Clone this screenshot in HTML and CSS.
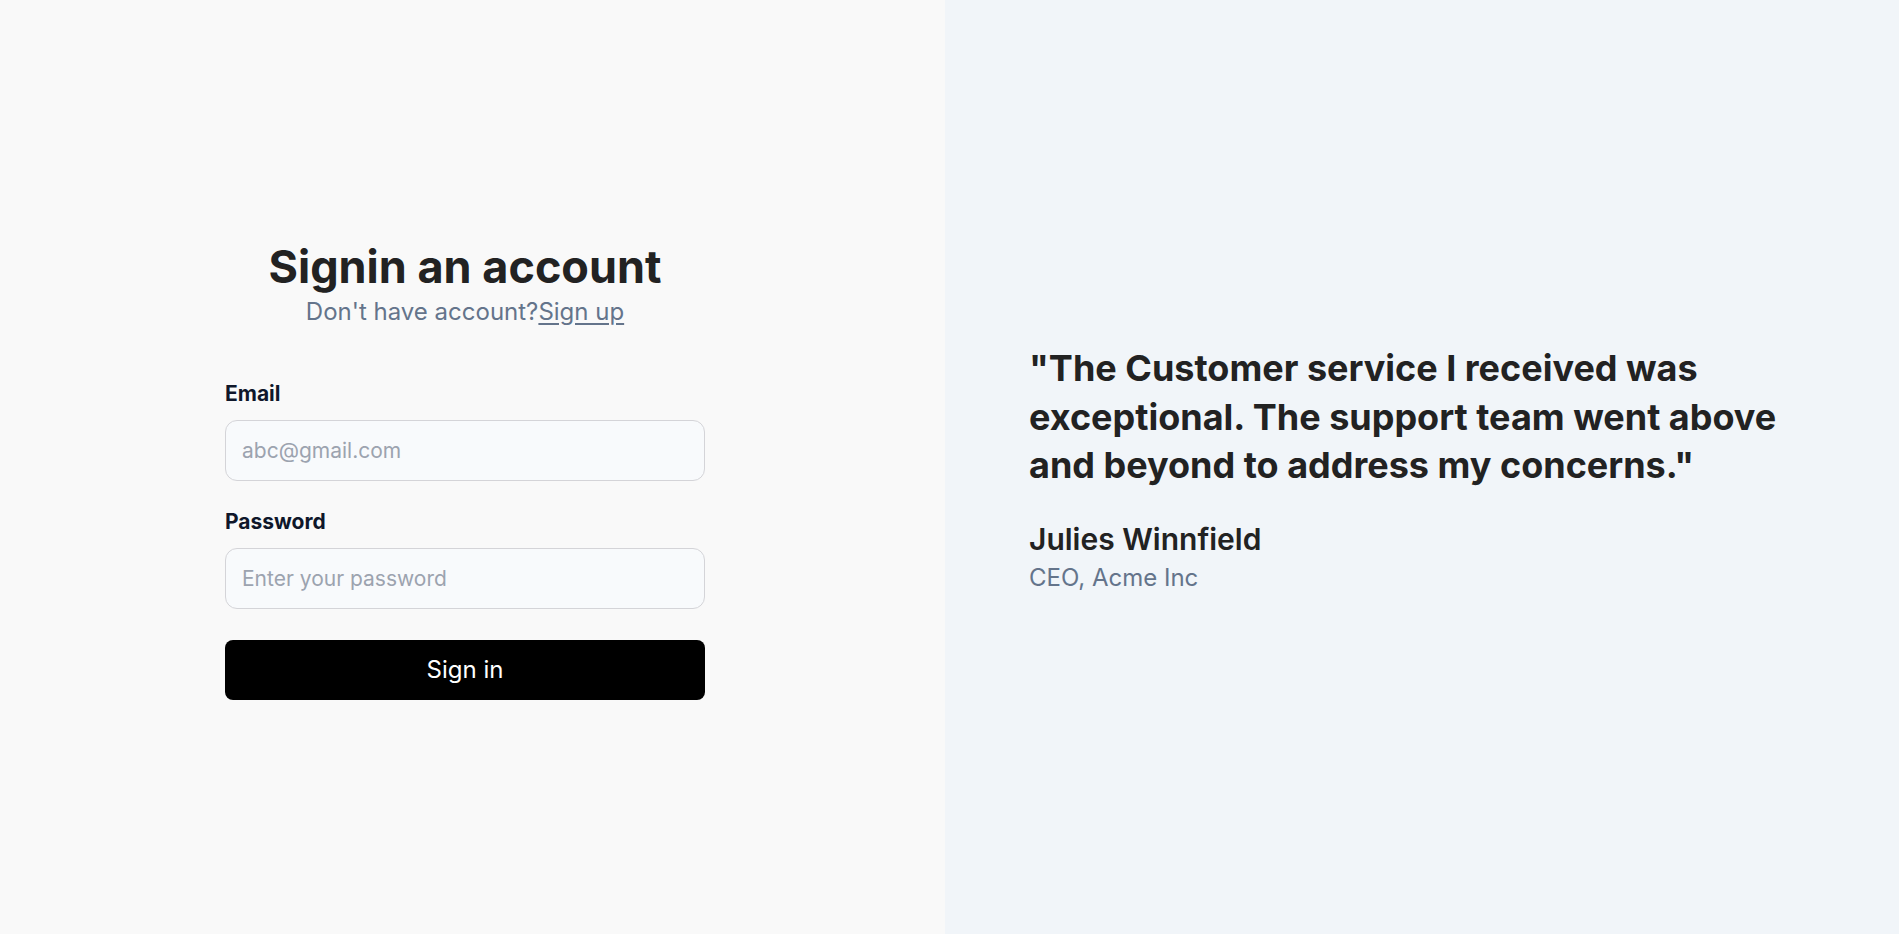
FILE: index.html
```html
<!DOCTYPE html>
<html lang="en">
<head>
<meta charset="utf-8">
<title>Signin</title>
<link rel="stylesheet" href="styles.css">
</head>
<body>
<main class="page">
  <section class="left">
    <div class="form-wrap">
      <h1 class="title">Signin an account</h1>
      <p class="subtitle">Don't have account?<a href="#" class="link">Sign up</a></p>
      <form class="form">
        <label class="label" for="email">Email</label>
        <input class="input" id="email" type="email" placeholder="abc@gmail.com">
        <label class="label label-pw" for="password">Password</label>
        <input class="input" id="password" type="password" placeholder="Enter your password">
        <button class="btn" type="button">Sign in</button>
      </form>
    </div>
  </section>
  <section class="right">
    <div class="testimonial">
      <blockquote class="quote">"The Customer service I received was exceptional. The support team went above and beyond to address my concerns."</blockquote>
      <div class="name">Julies Winnfield</div>
      <div class="role">CEO, Acme Inc</div>
    </div>
  </section>
</main>
</body>
</html>
```
FILE: styles.css
```css
* { box-sizing: border-box; }
html, body { margin: 0; padding: 0; }
body {
  font-family: Inter, "Noto Sans", sans-serif;
  color: #222222;
}
.page {
  display: grid;
  grid-template-columns: 945px 1fr;
  height: 934px;
}
.left {
  background: #f9f9f9;
  display: flex;
  align-items: center;
  justify-content: center;
  padding-right: 15px;
  padding-top: 5px;
}
.form-wrap {
  width: 480px;
  display: flex;
  flex-direction: column;
}
.title {
  margin: 0;
  font-size: 45px;
  line-height: 54px;
  font-weight: 700;
  text-align: center;
  color: #222222;
}
.subtitle {
  margin: 3px 0 0;
  font-size: 24px;
  line-height: 29px;
  text-align: center;
  color: #64748b;
}
.link {
  color: #64748b;
  text-decoration: underline;
  text-underline-offset: 3px;
}
.form {
  display: flex;
  flex-direction: column;
  margin-top: 55px;
}
.label {
  font-size: 21px;
  line-height: 25px;
  font-weight: 700;
  color: #0f172a;
}
.label-pw { margin-top: 28px; }
.input {
  margin-top: 14px;
  height: 61px;
  border: 1px solid #d4d4d8;
  border-radius: 12px;
  background: #f8fafc;
  padding: 0 16px;
  font-family: Inter, "Noto Sans", sans-serif;
  font-size: 21px;
  color: #222222;
}
.input::placeholder { color: #9ca3af; }
.btn {
  margin-top: 31px;
  height: 60px;
  border: none;
  border-radius: 8px;
  background: #000000;
  color: #ffffff;
  font-family: Inter, "Noto Sans", sans-serif;
  font-size: 24px;
  font-weight: 400;
}
.right {
  background: #f1f5f9;
  display: flex;
  align-items: center;
  padding-left: 84px;
  padding-top: 2px;
}
.testimonial {
  width: 780px;
  display: flex;
  flex-direction: column;
}
.quote {
  margin: 0;
  font-size: 36px;
  line-height: 48.4px;
  font-weight: 700;
  color: #222222;
}
.name {
  margin-top: 31px;
  font-size: 30px;
  line-height: 36px;
  font-weight: 600;
  color: #222222;
}
.role {
  margin-top: 6px;
  font-size: 24px;
  line-height: 29px;
  color: #64748b;
}
```
